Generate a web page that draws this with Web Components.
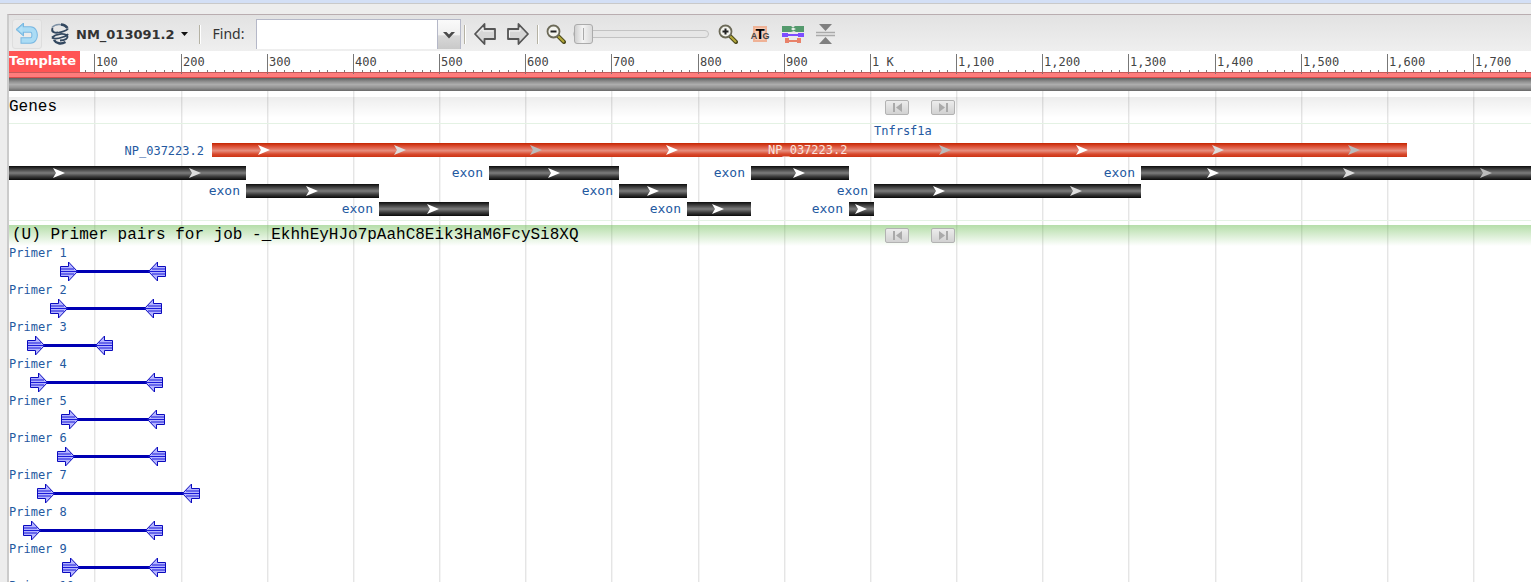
<!DOCTYPE html>
<html lang="en">
<head>
<meta charset="utf-8">
<title>Sequence viewer</title>
<style>
  body { margin: 0; background: #ededed; font-family: "DejaVu Sans", sans-serif; height: 100vh; overflow: hidden; }
</style>
</head>
<body>
<seq-viewer>
  <tool-bar slot="toolbar"></tool-bar>
  <seq-ruler name="Template"></seq-ruler>
  <track-header class="genes">Genes</track-header>
  <gene-track></gene-track>
  <track-header tone="green">(U) Primer pairs for job -_EkhhEyHJo7pAahC8Eik3HaM6FcySi8XQ</track-header>
  <primer-pair from="60" to="166">Primer 1</primer-pair>
  <primer-pair from="50" to="162">Primer 2</primer-pair>
  <primer-pair from="27" to="113">Primer 3</primer-pair>
  <primer-pair from="30" to="163">Primer 4</primer-pair>
  <primer-pair from="61" to="165">Primer 5</primer-pair>
  <primer-pair from="57" to="166">Primer 6</primer-pair>
  <primer-pair from="37" to="200">Primer 7</primer-pair>
  <primer-pair from="23" to="163">Primer 8</primer-pair>
  <primer-pair from="62" to="166">Primer 9</primer-pair>
  <primer-pair from="30" to="166">Primer 10</primer-pair>
</seq-viewer>

<script>
// Horizontal positions are measured from the viewer's outer edge;
// the drawing area starts after the margin and border.
const ORIGIN = 9;
const TICKS = [94, 181, 267, 353, 439, 525, 611, 698, 784, 870, 956, 1042, 1128, 1215, 1301, 1387, 1473, 1559, 1645, 1731, 1817, 1903];
const tickLabel = n => n === 10 ? '1 K' : (n * 100).toLocaleString('en-US');

class Base extends HTMLElement {
  constructor() {
    super();
    this.attachShadow({ mode: 'open' });
  }
  connectedCallback() { this.shadowRoot.innerHTML = this.render(); }
}

customElements.define('seq-viewer', class extends Base {
  render() {
    const lines = TICKS.map(x => `<rect x="${x - ORIGIN}" width="1" height="100%" fill="#e5e5e5"/><rect x="${x - ORIGIN + 1}" width="1" height="100%" fill="#f4f4f4"/>`).join('');
    return `<style>
      :host { display: flex; flex-direction: column; height: 100vh; box-sizing: border-box; border-top: 3px solid #d3dff5; }
      .page { flex: 1; min-height: 0; display: flex; border-top: 1px solid #c9c9c9; padding: 10px 0 0 7px; }
      .panel { flex: 1; min-width: 0; display: flex; flex-direction: column; border-left: 2px solid #cbcbcb; border-top: 1px solid #b9adb0; }
      .canvas { flex: 1; min-height: 0; position: relative; background: #fff; overflow: hidden; }
      .grid { position: absolute; inset: 0; width: 100%; height: 100%; }
      .tracks { position: relative; }
    </style>
    <div class="page"><main class="panel">
      <slot name="toolbar"></slot>
      <div class="canvas">
        <svg class="grid" aria-hidden="true">${lines}</svg>
        <div class="tracks"><slot></slot></div>
      </div>
    </main></div>`;
  }
});

customElements.define('tool-sep', class extends Base {
  render() {
    return `<style>:host { display: block; width: 1px; height: 19px; background: #b5b2a4; border-right: 1px solid #fff; }</style>`;
  }
});

customElements.define('icon-button', class extends Base {
  render() {
    const label = this.getAttribute('label');
    return `<style>
      :host { display: block; }
      button { display: flex; align-items: center; gap: 6px; margin: 0; padding: 0; border: 0; background: none; height: 30px; font: bold 13px "DejaVu Sans", sans-serif; color: #333; }
      :host([boxed]) button { width: 30px; justify-content: center; border: 1px solid #dedede; border-radius: 3px; box-sizing: border-box; background: #ebebeb; }
    </style><button type="button" aria-label="${label}" title="${label}"><slot></slot></button>`;
  }
});

customElements.define('find-box', class extends Base {
  render() {
    return `<style>
      :host { display: flex; align-items: center; gap: 12px; }
      label { font: 14px "Noto Sans", sans-serif; color: #333; line-height: 20px; }
      .box { display: flex; width: 205px; height: 30px; box-sizing: border-box; border: 1px solid #b5b8c8; border-bottom: 0; }
      input { flex: 1; min-width: 0; border: 0; padding: 0 4px; background: #fff; font: 14px "Noto Sans", sans-serif; outline: 0; }
      button { width: 23px; padding: 0; border: 0; border-left: 1px solid #b5b8c8; background: linear-gradient(#fafafa, #f0f0f0 50%, #d8d8d8 55%, #c9c9c9); display: flex; justify-content: center; align-items: center; }
    </style>
    <label for="q">Find:</label>
    <div class="box"><input id="q" type="text" autocomplete="off">
      <button type="button" aria-label="Show search history"><svg width="12" height="8"><path d="M0 1h3.5L6 3.500 8.500 1H12L6 7.500Z" fill="#4a4a4a"/></svg></button></div>`;
  }
});

customElements.define('zoom-slider', class extends Base {
  render() {
    return `<style>
      :host { display: block; width: 136px; height: 22px; }
      input { -webkit-appearance: none; appearance: none; display: block; width: 100%; height: 22px; margin: 0; background: none; }
      input::-webkit-slider-runnable-track { height: 8px; border: 1px solid #c2c2c2; border-radius: 4px; background: #e6e6e6; box-sizing: border-box; }
      input::-webkit-slider-thumb { -webkit-appearance: none; width: 19px; height: 20px; margin-top: -7px; border: 1px solid #ababab; border-radius: 3px; box-sizing: border-box; background: linear-gradient(#aaa, #aaa) center / 1px 12px no-repeat, linear-gradient(90deg, #d0d0d0, #f4f4f4 45%, #dadada); }
    </style><input type="range" min="0" max="100" value="0" aria-label="Zoom level">`;
  }
});

const lens = sign => `<svg width="20" height="20" viewBox="0 0 20 20">
  <path d="M12 12l6 6" stroke="#4c4a1c" stroke-width="4" stroke-linecap="round"/>
  <path d="M12.500 12.500l5 5" stroke="#b5a93a" stroke-width="2" stroke-linecap="round"/>
  <circle cx="7.500" cy="7.500" r="6" fill="#f3f3ee" stroke="#6c6a58" stroke-width="1.800"/>
  <path d="${sign}" stroke="#222" stroke-width="2" fill="none"/></svg>`;

customElements.define('tool-bar', class extends Base {
  render() {
    return `<style>
      :host { display: block; }
      nav { display: flex; align-items: center; height: 36px; box-sizing: border-box; padding: 2px 0 0 3px; background: linear-gradient(#e2e2e2, #efefef); }
      svg { display: block; flex: none; }
      .name { margin: 0 11px 0 8px; }
      find-box { margin: 0 3px 0 12px; }
      .prev { margin: 0 11px 0 8px; }
      .next { margin-right: 8px; }
      .out { margin: 0 7px; }
      .in { margin: 0 12px 0 9px; }
      .tool { margin-right: 12px; }
    </style>
    <nav aria-label="Viewer tools">
      <icon-button boxed label="Undo"><svg width="22" height="22" viewBox="0 0 22 22">
        <path d="M6 6.500h8.500c5.500 0 5.500 11 0 11H4.500" fill="none" stroke="#78b8e2" stroke-width="6.500"/>
        <path d="M0 6.500L7.500 0v13Z" fill="#8cc8ea" stroke="#78b8e2" stroke-linejoin="round"/>
        <path d="M4 6.500h10.500c5.500 0 5.500 11 0 11H5.500" fill="none" stroke="#abdcf5" stroke-width="4.500"/>
        <path d="M2 6.500L6.500 2.500v8Z" fill="#b4e0f6"/></svg></icon-button>
      <icon-button class="name" label="NM_013091.2"><svg width="20" height="22" viewBox="0 0 20 22">
        <path d="M2 4.500C5 1 12 0 17 4.500" fill="none" stroke="#7f92a6" stroke-width="1.500"/>
        <path d="M11 1.500C14 1.500 16 3 17.500 5" fill="none" stroke="#32475f" stroke-width="2.500"/>
        <path d="M2.500 5C1 9 5 10.500 9 9.500C13 8.500 17 8 18 5.500M2.500 5.500C1 9 4 10 8 9.500" fill="none" stroke="#32475f" stroke-width="1.800"/>
        <path d="M2 14.500C6 10.500 14 10 17 12.500C19 15 15 17.500 10 17.500M2 14.500C4 16.500 9 15.500 13 14C15 13.500 17 13 18 11" fill="none" stroke="#32475f" stroke-width="1.800"/>
        <path d="M4 17C6 20.500 11 21.500 15.500 19" fill="none" stroke="#32475f" stroke-width="2.500"/></svg>
        <span>NM_013091.2</span><svg width="7" height="4"><path d="M0 0h7L3.500 4Z" fill="#111"/></svg></icon-button>
      <tool-sep></tool-sep>
      <find-box></find-box>
      <tool-sep></tool-sep>
      <icon-button class="prev" label="Previous"><svg width="22" height="22" viewBox="0 0 22 22">
        <path d="M1 11L10.500 1v5h10.500v10H10.500v5Z" fill="#d6d6d6" stroke="#555" stroke-width="1.800" stroke-linejoin="round"/><path d="M3.500 11L9 5v3h10" fill="none" stroke="#f4f4f4"/></svg></icon-button>
      <icon-button class="next" label="Next"><svg width="22" height="22" viewBox="0 0 22 22">
        <path d="M21 11L11.500 1v5H1v10h10.500v5Z" fill="#d6d6d6" stroke="#555" stroke-width="1.800" stroke-linejoin="round"/><path d="M2.500 14V8H13V5" fill="none" stroke="#f4f4f4"/></svg></icon-button>
      <tool-sep></tool-sep>
      <icon-button class="out" label="Zoom out">${lens('M4.500 7.500h6')}</icon-button>
      <zoom-slider></zoom-slider>
      <icon-button class="in" label="Zoom in">${lens('M4.500 7.500h6M7.500 4.500v6')}</icon-button>
      <icon-button class="tool" label="Zoom to sequence"><svg width="20" height="18" viewBox="0 0 20 18">
        <rect x="3" y="1" width="14" height="16" fill="#efb296"/><rect x="5" y="3" width="10" height="12" fill="#f6cdb8"/>
        <g font-family="Liberation Sans, sans-serif" font-weight="bold" text-anchor="middle"><text x="4" y="14" font-size="9" fill="#444">A</text><text x="16" y="14" font-size="9" fill="#444">G</text><text x="10" y="14" font-size="15" fill="#000">T</text></g></svg></icon-button>
      <icon-button class="tool" label="Primer search"><svg width="22" height="17" viewBox="0 0 22 17">
        <path d="M0 0h9l2 1.500L13 0h9v6h-8l-2-1-3 1H0Z" fill="#549a6d"/><path d="M9 3l2-1.500 3 1.500-3 1.500Z" fill="#e9efe9"/>
        <path d="M0 7h6v4H0zM16 7h6v4h-6zM6 8h10v2H6z" fill="#7d4dff"/>
        <path d="M3 12h4v5H3zM15 12h4v5h-4zM7 14h8v2H7z" fill="#e8826a"/></svg></icon-button>
      <icon-button label="Collapse tracks"><svg width="19" height="20" viewBox="0 0 19 20">
        <path d="M3 0h13L9.500 7ZM3 20h13L9.500 13Z" fill="#808080"/><path d="M0 8.500h19M0 11.500h19" stroke="#aaa" stroke-width="1.500"/></svg></icon-button>
    </nav>`;
  }
});

customElements.define('seq-ruler', class extends Base {
  render() {
    let marks = '';
    let prev = 8;
    TICKS.forEach((x, i) => {
      for (let k = 1; k < 10; k++) {
        marks += `<rect x="${Math.round(prev + (x - prev) * k / 10) - ORIGIN}" y="19" width="1" height="2" fill="#777"/>`;
      }
      marks += `<rect x="${x - ORIGIN}" y="3" width="1" height="20" fill="#777"/>`;
      // a number is drawn only where it fits in the window
      if (x + 40 < innerWidth) marks += `<text x="${x - ORIGIN + 2}" y="15">${tickLabel(i + 1)}</text>`;
      prev = x;
    });
    return `<style>
      :host { display: block; position: relative; background: #fff; }
      svg { display: block; width: 100%; height: 27px; font: 12px "DejaVu Sans Mono", monospace; fill: #444; }
      .name { position: absolute; left: 0; top: 0; height: 21px; width: 71px; background: #ff5454; color: #fff; font: bold 13px/20px "DejaVu Sans", sans-serif; }
      .bar { height: 13px; background: linear-gradient(#5f5f5f, #939393 30%, #adadad 50%, #939393 75%, #686868); }
    </style>
    <svg><rect y="21" width="100%" height="6" fill="#ff7c7c"/>${marks}<rect y="21" width="100%" height="1" fill="#c45a5a"/><rect y="26" width="100%" height="1" fill="#d94c4c"/></svg>
    <div class="name">${this.getAttribute('name')}</div>
    <div class="bar"></div>`;
  }
});

customElements.define('track-header', class extends Base {
  render() {
    const btn = (label, d) => `<button type="button" aria-label="${label}"><svg width="11" height="9"><path d="${d}" fill="#aaa"/></svg></button>`;
    return `<style>
      :host { display: grid; grid-template-columns: 876fr 646fr; align-items: center; height: 21px; color: #000; font: 16px/18px "Liberation Mono", monospace; white-space: nowrap;
        background: linear-gradient(rgba(0, 0, 0, .07), rgba(0, 0, 0, 0)); }
      :host(.genes) { margin-top: 6px; }
      :host([tone="green"]) { background: linear-gradient(rgba(100, 185, 75, .48), rgba(100, 185, 75, 0)); }
      :host([tone="green"]) .title { padding-left: 3px; }
      .title { padding-bottom: 2px; }
      .nav { display: flex; gap: 22px; }
      button { width: 24px; height: 15px; padding: 0; border: 1px solid #b2b2b2; border-radius: 2px; background: linear-gradient(#ececec, #d2d2d2); display: flex; align-items: center; justify-content: center; }
    </style>
    <span class="title"><slot></slot></span>
    <span class="nav">${btn('Previous feature', 'M1 0h2v9H1zM10 0v9L4 4.500Z')}${btn('Next feature', 'M8 0h2v9H8zM1 0v9L7 4.500Z')}</span>`;
  }
});

const SHADES = { w: '#fff', d: '#ddd', g: '#bbb' };

customElements.define('gene-track', class extends Base {
  render() {
    // row top, start, end, chevrons, whether the bar is named
    const exons = [
      [48, 9, 246, '59w 195d', 0], [48, 489, 619, '554w', 1], [48, 751, 849, '799w', 1], [48, 1141, 1900, '1213w 1349d 1486g', 1],
      [66, 246, 379, '312w', 1], [66, 619, 687, '653w', 1], [66, 874, 1141, '939w 1076d', 1],
      [84, 379, 489, '433w', 1], [84, 687, 751, '718w', 1], [84, 849, 874, '861w', 1]
    ];
    const chevrons = (list, y) => list.split(' ').map(c =>
      `<path transform="translate(${parseInt(c) - ORIGIN} ${y + 7})" d="M-6-5L6 0L-6 5L-3 0Z" fill="${SHADES[c.slice(-1)]}"/>`).join('');
    const bar = (y, a, b, fill, list) =>
      `<rect x="${a - ORIGIN}" y="${y}" width="${b - a}" height="14" fill="url(#${fill})"/>${chevrons(list, y)}`;
    return `<style>
      :host { display: block; }
      svg { display: block; width: 100%; height: 107px; font: 12px "DejaVu Sans Mono", monospace; fill: #24599f; }
      .exon { font-size: 13px; text-anchor: end; }
    </style>
    <svg>
      <defs>
        <linearGradient id="dark" x2="0" y2="1"><stop stop-color="#0c0c0c"/><stop offset=".25" stop-color="#444"/><stop offset=".5" stop-color="#7c7c7c"/><stop offset=".75" stop-color="#3c3c3c"/><stop offset="1" stop-color="#080808"/></linearGradient>
        <linearGradient id="red" x2="0" y2="1"><stop stop-color="#c42400"/><stop offset=".25" stop-color="#dc5238"/><stop offset=".55" stop-color="#e88e7e"/><stop offset=".8" stop-color="#d8482c"/><stop offset="1" stop-color="#cc3414"/></linearGradient>
      </defs>
      <rect y="5" width="100%" height="1" fill="#e4f2e4"/><rect y="102" width="100%" height="1" fill="#e4f2e4"/>
      <text x="865" y="17">Tnfrsf1a</text>
      <text x="195" y="37" text-anchor="end">NP_037223.2</text>
      ${bar(25, 212, 1407, 'red', '264w 400d 536g 672w 945g 1082w 1218d 1354g')}
      <text x="759" y="36" fill="#fbe3de">NP_037223.2</text>
      ${exons.map(([y, a, b, list, named]) => bar(y, a, b, 'dark', list) + (named ? `<text class="exon" x="${a - ORIGIN - 6}" y="${y + 11}">exon</text>` : '')).join('')}
    </svg>`;
  }
});

customElements.define('primer-pair', class extends Base {
  render() {
    const a = this.getAttribute('from') - ORIGIN;
    const b = this.getAttribute('to') - ORIGIN;
    const arrow = `<path d="M.5 6.500h8v-4.500l9 9.500-9 9.500v-4.500h-8Z" fill="#b4b4ff" stroke="#0a0abe"/><path d="M1 9h13M1 11.500h16M1 14h13" stroke="#1a1ad8"/>`;
    return `<style>
      :host { display: block; height: 37px; font: 12px/14px "DejaVu Sans Mono", monospace; color: #24599f; }
      svg { display: block; width: 100%; height: 23px; }
    </style>
    <slot></slot>
    <svg><rect x="${a + 17}" y="10" width="${b - a - 34}" height="3" fill="#0000b4"/>
      <g transform="translate(${a} 0)">${arrow}</g><g transform="translate(${b} 0) scale(-1 1)">${arrow}</g></svg>`;
  }
});
</script>
</body>
</html>
